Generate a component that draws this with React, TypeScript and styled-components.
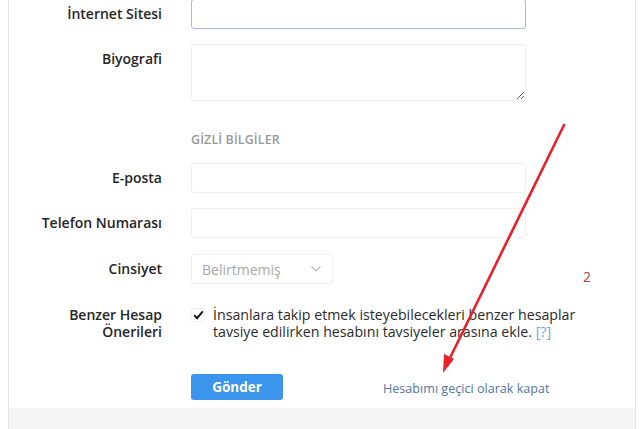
import { createGlobalStyle, styled } from "styled-components";

const GlobalStyle = createGlobalStyle`
  html, body {
    margin: 0;
    padding: 0;
    background: #ffffff;
  }
  body {
    font-family: "Open Sans", "Noto Sans", sans-serif;
    color: #262626;
  }
`;

const Page = styled.div`
  position: relative;
  display: flow-root;
  height: 429px;
  overflow: hidden;
  padding: 0 7px 0 8px;
`;

const Card = styled.main`
  margin-top: -20px;
  border: 1px solid #e3e3e3;
  border-top: none;
  background: #fff;
`;

const Form = styled.form`
  padding: 19px 0 8px;
`;

const Row = styled.div<{ $mb: number }>`
  display: grid;
  grid-template-columns: 153px 1fr;
  column-gap: 29px;
  margin-bottom: ${({ $mb }) => $mb}px;
`;

const Label = styled.label<{ $lh?: number }>`
  text-align: right;
  font-size: 14px;
  font-weight: 600;
  line-height: ${({ $lh }) => $lh ?? 30}px;
  color: #262626;
`;

const Input = styled.input<{ $focus?: boolean }>`
  box-sizing: border-box;
  width: 335px;
  height: 30px;
  border: 1px solid ${({ $focus }) => ($focus ? "#a4bbe0" : "#efefef")};
  border-radius: 3px;
  background: #fff;
  padding: 0 10px;
  font: inherit;
  outline: none;
`;

const TextArea = styled.textarea`
  box-sizing: border-box;
  display: block;
  width: 335px;
  height: 57px;
  border: 1px solid #efefef;
  border-radius: 3px;
  background: #fff;
  font: inherit;
  outline: none;
`;

const Heading = styled.h2`
  grid-column: 2;
  margin: 0;
  font-size: 12.5px;
  font-weight: 600;
  line-height: 18px;
  color: #999;
  letter-spacing: 0.1px;
`;

const Select = styled.div`
  box-sizing: border-box;
  width: 142px;
  height: 30px;
  border: 1px solid #efefef;
  border-radius: 3px;
  display: flex;
  align-items: center;
  justify-content: space-between;
  padding: 0 10px 0 10px;
  font-size: 14px;
  color: #a8a8a8;
`;

const CheckWrap = styled.div`
  display: flex;
  align-items: flex-start;
  gap: 8px;
`;

const CheckBox = styled.span`
  box-sizing: border-box;
  flex: none;
  width: 14px;
  height: 14px;
  margin-top: 2px;
  border: 1px solid #f2f2f2;
  display: flex;
  align-items: center;
  justify-content: center;
`;

const CheckText = styled.p`
  margin: 0;
  width: 376px;
  font-size: 14.2px;
  line-height: 17px;
  color: #2b2b2b;
`;

const Help = styled.a`
  color: #6aa6e8;
  text-decoration: none;
`;

const Actions = styled.div`
  display: flex;
  align-items: center;
`;

const SubmitButton = styled.button`
  width: 92px;
  height: 26px;
  border: none;
  border-radius: 3px;
  background: #3b95ec;
  color: #fff;
  font-family: inherit;
  font-size: 13.5px;
  font-weight: 700;
  cursor: pointer;
`;

const DisableLink = styled.a`
  margin-left: 100px;
  margin-top: 2px;
  font-size: 12.6px;
  color: #5276a6;
  text-decoration: none;
`;

const Footer = styled.div`
  height: 40px;
  background: #f4f4f4;
`;

const Overlay = styled.svg`
  position: absolute;
  inset: 0;
  pointer-events: none;
`;

function Chevron() {
  return (
    <svg width="12" height="8" viewBox="0 0 12 8">
      <path d="M1.5 1.5 L6 6 L10.5 1.5" fill="none" stroke="#b5b5b5" strokeWidth="1.1" />
    </svg>
  );
}

function Check() {
  return (
    <svg width="11" height="10" viewBox="0 0 11 10">
      <path d="M1.2 5.2 L4 8.2 L9.8 1.4" fill="none" stroke="#111" strokeWidth="1.9" />
    </svg>
  );
}

export default function App() {
  return (
    <>
      <GlobalStyle />
      <Page>
        <Card>
          <Form onSubmit={(e) => e.preventDefault()}>
            <Row $mb={15}>
              <Label>İnternet Sitesi</Label>
              <Input $focus type="text" />
            </Row>
            <Row $mb={30}>
              <Label>Biyografi</Label>
              <TextArea />
            </Row>
            <Row $mb={14}>
              <Heading>GİZLİ BİLGİLER</Heading>
            </Row>
            <Row $mb={15}>
              <Label>E-posta</Label>
              <Input type="email" />
            </Row>
            <Row $mb={16}>
              <Label>Telefon Numarası</Label>
              <Input type="tel" />
            </Row>
            <Row $mb={22}>
              <Label>Cinsiyet</Label>
              <Select>
                Belirtmemiş
                <Chevron />
              </Select>
            </Row>
            <Row $mb={34}>
              <Label $lh={17}>
                Benzer Hesap
                <br />
                Önerileri
              </Label>
              <CheckWrap>
                <CheckBox>
                  <Check />
                </CheckBox>
                <CheckText>
                  İnsanlara takip etmek isteyebilecekleri benzer hesaplar tavsiye
                  edilirken hesabını tavsiyeler arasına ekle. <Help href="#">[?]</Help>
                </CheckText>
              </CheckWrap>
            </Row>
            <Row $mb={0}>
              <span />
              <Actions>
                <SubmitButton type="submit">Gönder</SubmitButton>
                <DisableLink href="#">Hesabımı geçici olarak kapat</DisableLink>
              </Actions>
            </Row>
          </Form>
          <Footer />
        </Card>
        <Overlay width="643" height="429" viewBox="0 0 643 429">
          <line x1="564" y1="125" x2="449" y2="360" stroke="#e8202a" strokeWidth="2.6" strokeLinecap="round" />
          <path d="M443 373 L444 354 L454 359 Z" fill="#e8202a" />
          <text x="583" y="282" fontSize="14" fill="#b03a48" fontFamily="Open Sans, sans-serif">
            2
          </text>
        </Overlay>
      </Page>
    </>
  );
}
